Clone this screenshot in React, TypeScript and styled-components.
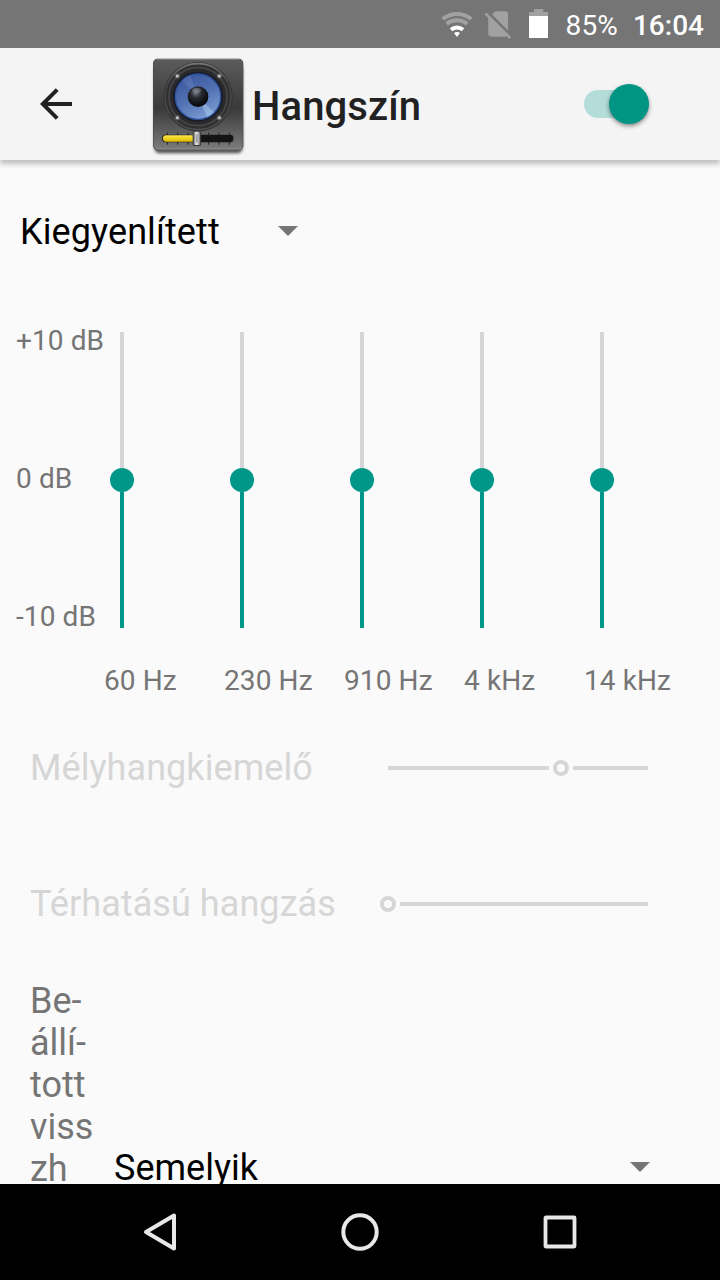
import React from "react";
import styled, { createGlobalStyle } from "styled-components";

const TEAL = "#009688";
const DISABLED = "#d6d6d6";
const GREY = "#757575";

const GlobalStyle = createGlobalStyle`
  body { margin: 0; background: #fafafa; font-family: Roboto, sans-serif; }
  svg { display: block; flex: none; }
`;

const Screen = styled.div`
  display: flex;
  flex-direction: column;
  width: 720px;
  height: 1280px;
  overflow: hidden;
  background: #fafafa;
  white-space: nowrap;
`;

const StatusBar = styled.header`
  box-sizing: border-box;
  display: flex;
  justify-content: flex-end;
  flex: none;
  height: 48px;
  padding: 10px 16px 0 0;
  background: ${GREY};
  color: #fff;
  font-size: 28px;
  line-height: 32px;
`;

const StatusIcons = styled.div`
  display: flex;
  align-items: flex-start;
  margin: -1px 18px 0 0;
`;

const WifiIcon = styled.svg`
  margin: 1px 10px 0 0;
`;

const NoSimIcon = styled.svg`
  margin: 2px 17px 0 0;
`;

const Percent = styled.span`
  letter-spacing: 0.15px;
`;

const Clock = styled.time`
  margin-left: 15px;
  font-weight: 500;
`;

const AppBar = styled.div`
  position: relative;
  z-index: 1;
  box-sizing: border-box;
  display: flex;
  flex: none;
  align-items: center;
  height: 112px;
  padding: 0 70px 0 40px;
  background: #f4f4f4;
  box-shadow: 0 4px 5px rgba(0, 0, 0, 0.24);
`;

const AppIcon = styled.svg`
  margin: 4px 0 0 78px;
`;

const Title = styled.h1`
  flex: 1;
  margin: 6px 0 0 6px;
  color: #212121;
  font-size: 40px;
  font-weight: 500;
  letter-spacing: 0.1px;
  line-height: 48px;
`;

const Toggle = styled.div`
  box-sizing: border-box;
  display: flex;
  align-items: center;
  justify-content: flex-end;
  width: 66px;
  height: 28px;
  padding-right: 1px;
  border-radius: 14px;
  background: linear-gradient(90deg, #b4dcd8 50px, transparent 50px);
`;

const ToggleThumb = styled.span`
  flex: none;
  width: 40px;
  height: 40px;
  border-radius: 50%;
  background: #009485;
  box-shadow: 0 2px 4px rgba(0, 0, 0, 0.45);
`;

const Content = styled.main`
  flex: 1;
  min-height: 0;
  overflow: hidden;
`;

const Spinner = styled.div<{ $width: number }>`
  display: flex;
  align-items: flex-start;
  justify-content: space-between;
  width: ${(p) => p.$width}px;
  color: #000;
  font-size: 36px;
  line-height: 42px;
`;

const SpinnerArrow = styled.svg`
  margin-top: 14px;
`;

const PresetSpinner = styled(Spinner)`
  margin: 51px 0 0 20px;
  letter-spacing: 0.1px;
`;

const Equalizer = styled.section`
  display: flex;
  height: 296px;
  margin-top: 79px;
`;

const Levels = styled.div`
  box-sizing: border-box;
  display: flex;
  flex-direction: column;
  justify-content: space-between;
  width: 110px;
  height: 308px;
  margin-top: -7px;
  padding-left: 16px;
  color: ${GREY};
  font-size: 28px;
  letter-spacing: 0.1px;
  line-height: 32px;
`;

const Band = styled.div`
  display: flex;
  flex-direction: column;
  align-items: center;
  width: 24px;
  margin-right: 96px;
`;

const BandTrack = styled.span<{ $active?: boolean }>`
  flex: 1;
  width: 4px;
  background: ${(p) => (p.$active ? TEAL : DISABLED)};
`;

const BandThumb = styled.span`
  width: 24px;
  height: 24px;
  border-radius: 50%;
  background: ${TEAL};
`;

const Frequencies = styled.div`
  display: grid;
  grid-template-columns: repeat(5, 120px);
  margin: 37px 0 3px 104px;
  color: ${GREY};
  font-size: 28px;
  letter-spacing: 0.1px;
  line-height: 32px;
`;

const EffectRow = styled.div`
  display: flex;
  align-items: center;
  height: 136px;
  padding-left: 30px;
  color: ${DISABLED};
  font-size: 36px;
  letter-spacing: 0.07px;
  line-height: 42px;
`;

const EffectName = styled.span`
  width: 358px;
`;

const EffectSlider = styled.div`
  display: flex;
  align-items: center;
  width: 260px;
`;

const SliderPart = styled.span<{ $width?: number }>`
  ${(p) => (p.$width === undefined ? "flex: 1;" : `width: ${p.$width}px;`)}
  height: 4px;
  background: ${DISABLED};
`;

const SliderRing = styled.span<{ $atStart?: boolean }>`
  box-sizing: border-box;
  width: 16px;
  height: 16px;
  margin: 0 4px 0 ${(p) => (p.$atStart ? -8 : 4)}px;
  border: 4px solid ${DISABLED};
  border-radius: 50%;
`;

const ReverbRow = styled.div`
  display: flex;
  align-items: flex-end;
  margin-top: 8px;
  padding-left: 30px;
`;

const ReverbName = styled.span`
  width: 84px;
  margin-bottom: -1px;
  color: ${GREY};
  font-size: 36px;
  line-height: 42px;
  white-space: pre-line;
`;

const NavBar = styled.nav`
  box-sizing: border-box;
  display: flex;
  flex: none;
  height: 96px;
  padding: 0 60px;
  background: #000;
`;

const NavButton = styled.div`
  display: flex;
  flex: 1;
  align-items: center;
  justify-content: center;
`;

const Caret = () => (
  <SpinnerArrow width="20" height="12" viewBox="0 0 20 12">
    <path d="M0 1h20L10 11z" fill={GREY} />
  </SpinnerArrow>
);

const SpeakerIcon = () => (
  <AppIcon width="96" height="100" viewBox="30 24 288 300">
    <defs>
      <linearGradient id="case" x1="0" y1="0" x2="0" y2="1">
        <stop offset="0" stopColor="#5c5c5c" />
        <stop offset="0.3" stopColor="#484848" />
        <stop offset="0.55" stopColor="#3a3a3a" />
        <stop offset="0.75" stopColor="#565656" />
        <stop offset="1" stopColor="#7a7a7a" />
      </linearGradient>
      <linearGradient id="rim" x1="0" y1="0" x2="0" y2="1">
        <stop offset="0" stopColor="#777" />
        <stop offset="0.3" stopColor="#444" />
        <stop offset="1" stopColor="#4c4c4c" />
      </linearGradient>
      <linearGradient id="cone" x1="0.2" y1="0" x2="0.7" y2="1">
        <stop offset="0" stopColor="#3a559c" />
        <stop offset="0.5" stopColor="#5271b3" />
        <stop offset="1" stopColor="#7c9fd4" />
      </linearGradient>
      <radialGradient id="cap" cx="0.4" cy="0.3" r="0.65">
        <stop offset="0" stopColor="#7a8089" />
        <stop offset="0.4" stopColor="#292c32" />
        <stop offset="1" stopColor="#08090d" />
      </radialGradient>
      <linearGradient id="fill" x1="0" y1="0" x2="0" y2="1">
        <stop offset="0" stopColor="#ffe84b" />
        <stop offset="1" stopColor="#dfb900" />
      </linearGradient>
      <linearGradient id="knob" x1="0" y1="0" x2="1" y2="0">
        <stop offset="0" stopColor="#777" />
        <stop offset="0.45" stopColor="#eee" />
        <stop offset="1" stopColor="#777" />
      </linearGradient>
      <filter id="soft" x="-10%" y="-10%" width="120%" height="120%">
        <feGaussianBlur stdDeviation="4" />
      </filter>
    </defs>
    <rect x="43" y="46" width="265" height="270" rx="16" fill="#000" opacity="0.65" filter="url(#soft)" />
    <rect x="39" y="32" width="271" height="274" rx="14" fill="#4a4a4a" />
    <rect x="41" y="33" width="267" height="269" rx="12" fill="url(#case)" />
    <path d="M51 34h247" stroke="#858585" strokeWidth="3" />
    <path d="M46 300q4 3 10 3h237q8 0 12-3" fill="none" stroke="#999" strokeWidth="3" />
    <circle cx="174" cy="146" r="104" fill="#303030" />
    <circle cx="174" cy="146" r="99" fill="none" stroke="url(#rim)" strokeWidth="5" />
    <circle cx="174" cy="146" r="87" fill="#2a2a2c" stroke="#464648" strokeWidth="5" />
    <circle cx="174" cy="146" r="75" fill="#171b2a" />
    <circle cx="174" cy="146" r="68" fill="url(#cone)" stroke="#2f549e" strokeWidth="4" />
    <path d="M174 146L202 208A68 68 0 0 0 222 193z" fill="#b7d9f5" opacity="0.4" />
    <path d="M174 146L126 98A68 68 0 0 1 151 82z" fill="#8fadd9" opacity="0.2" />
    <circle cx="174" cy="146" r="31" fill="url(#cap)" />
    <ellipse cx="170" cy="127" rx="13" ry="7" fill="#aab0b8" opacity="0.35" />
    {[112, 238].map((x) =>
      [84, 209].map((y) => (
        <g key={`${x}-${y}`}>
          <circle cx={x} cy={y} r="8" fill="#575757" />
          <circle cx={x} cy={y} r="4.5" fill="#c5c5c5" />
        </g>
      ))
    )}
    <path d="M82 254v36M113 254v36M144 254v36M206 254v36M237 254v36M268 254v36" stroke="#222" strokeWidth="3" />
    <rect x="67" y="260" width="213" height="23" rx="9" fill="#141414" />
    <path d="M78 262h84v19H78q-9 0-9-9.500t9-9.500z" fill="url(#fill)" />
    <rect x="158" y="249" width="25" height="45" rx="5" fill="#3a3a3a" />
    <rect x="161" y="251" width="19" height="40" rx="3" fill="url(#knob)" />
    <path d="M170.500 259v25" stroke="#777" strokeWidth="3" />
  </AppIcon>
);

const frequencies = ["60 Hz", "230 Hz", "910 Hz", "4 kHz", "14 kHz"];

export default function App() {
  return (
    <Screen>
      <GlobalStyle />
      <StatusBar>
        <StatusIcons>
          <WifiIcon width="34" height="28" viewBox="30 30 102 84">
            <g fill="none" strokeWidth="12">
              <path d="M38 57A68 68 0 0 1 124 57" stroke="#a1a1a1" />
              <path d="M50 71.500A50 50 0 0 1 112 71.500" stroke="#a1a1a1" />
              <path d="M63 89A28 28 0 0 1 99 89" stroke="#fff" />
            </g>
            <path d="M81 111L72 99Q81 93 90 99z" fill="#fff" />
          </WifiIcon>
          <NoSimIcon width="28" height="29" viewBox="2 2.900 19.760 20.470">
            <path
              d="M18.990 5c0-1.100-.89-2-1.990-2h-7L7.660 5.340 19 16.680 18.990 5zM3.650 3.880L2.380 5.150 5 7.770V19c0 1.100.9 2 2 2h10.010c.35 0 .67-.1.960-.26l1.880 1.880 1.270-1.270L3.650 3.880z"
              fill="#a1a1a1"
            />
          </NoSimIcon>
          <svg width="19" height="29" viewBox="297 27 57 87">
            <path d="M312 27h28v9h14v12h-57V36h15z" fill="#a1a1a1" />
            <path d="M297 48h57v66h-57z" fill="#fff" />
          </svg>
        </StatusIcons>
        <Percent>85%</Percent>
        <Clock>16:04</Clock>
      </StatusBar>

      <AppBar>
        <svg width="32" height="32" viewBox="0 0 32 32" fill="none" stroke="#212121" strokeWidth="4">
          <path d="M32 16H3M17.200 1.600L2.800 16l14.400 14.400" />
        </svg>
        <SpeakerIcon />
        <Title>Hangszín</Title>
        <Toggle>
          <ToggleThumb />
        </Toggle>
      </AppBar>

      <Content>
        <PresetSpinner $width={278}>
          Kiegyenlített
          <Caret />
        </PresetSpinner>

        <Equalizer>
          <Levels>
            <span>+10 dB</span>
            <span>0 dB</span>
            <span>-10 dB</span>
          </Levels>
          {frequencies.map((f) => (
            <Band key={f}>
              <BandTrack />
              <BandThumb />
              <BandTrack $active />
            </Band>
          ))}
        </Equalizer>
        <Frequencies>
          {frequencies.map((f) => (
            <span key={f}>{f}</span>
          ))}
        </Frequencies>

        <EffectRow>
          <EffectName>Mélyhangkiemelő</EffectName>
          <EffectSlider>
            <SliderPart $width={161} />
            <SliderRing />
            <SliderPart />
          </EffectSlider>
        </EffectRow>
        <EffectRow>
          <EffectName>Térhatású hangzás</EffectName>
          <EffectSlider>
            <SliderRing $atStart />
            <SliderPart />
          </EffectSlider>
        </EffectRow>

        <ReverbRow>
          <ReverbName>{"Be-\nállí-\ntott\nviss\nzh"}</ReverbName>
          <Spinner $width={536}>
            Semelyik
            <Caret />
          </Spinner>
        </ReverbRow>
      </Content>

      <NavBar>
        <NavButton>
          <svg width="36" height="40" viewBox="0 0 36 40">
            <path d="M32 3.500v33L4 20z" fill="none" stroke="#e8e8e8" strokeWidth="4" strokeLinejoin="round" />
          </svg>
        </NavButton>
        <NavButton>
          <svg width="40" height="40" viewBox="0 0 40 40">
            <circle cx="20" cy="20" r="16.700" fill="none" stroke="#e8e8e8" strokeWidth="4" />
          </svg>
        </NavButton>
        <NavButton>
          <svg width="36" height="36" viewBox="0 0 36 36">
            <rect x="3.500" y="3.500" width="29" height="29" rx="0.500" fill="none" stroke="#e8e8e8" strokeWidth="3.800" />
          </svg>
        </NavButton>
      </NavBar>
    </Screen>
  );
}
